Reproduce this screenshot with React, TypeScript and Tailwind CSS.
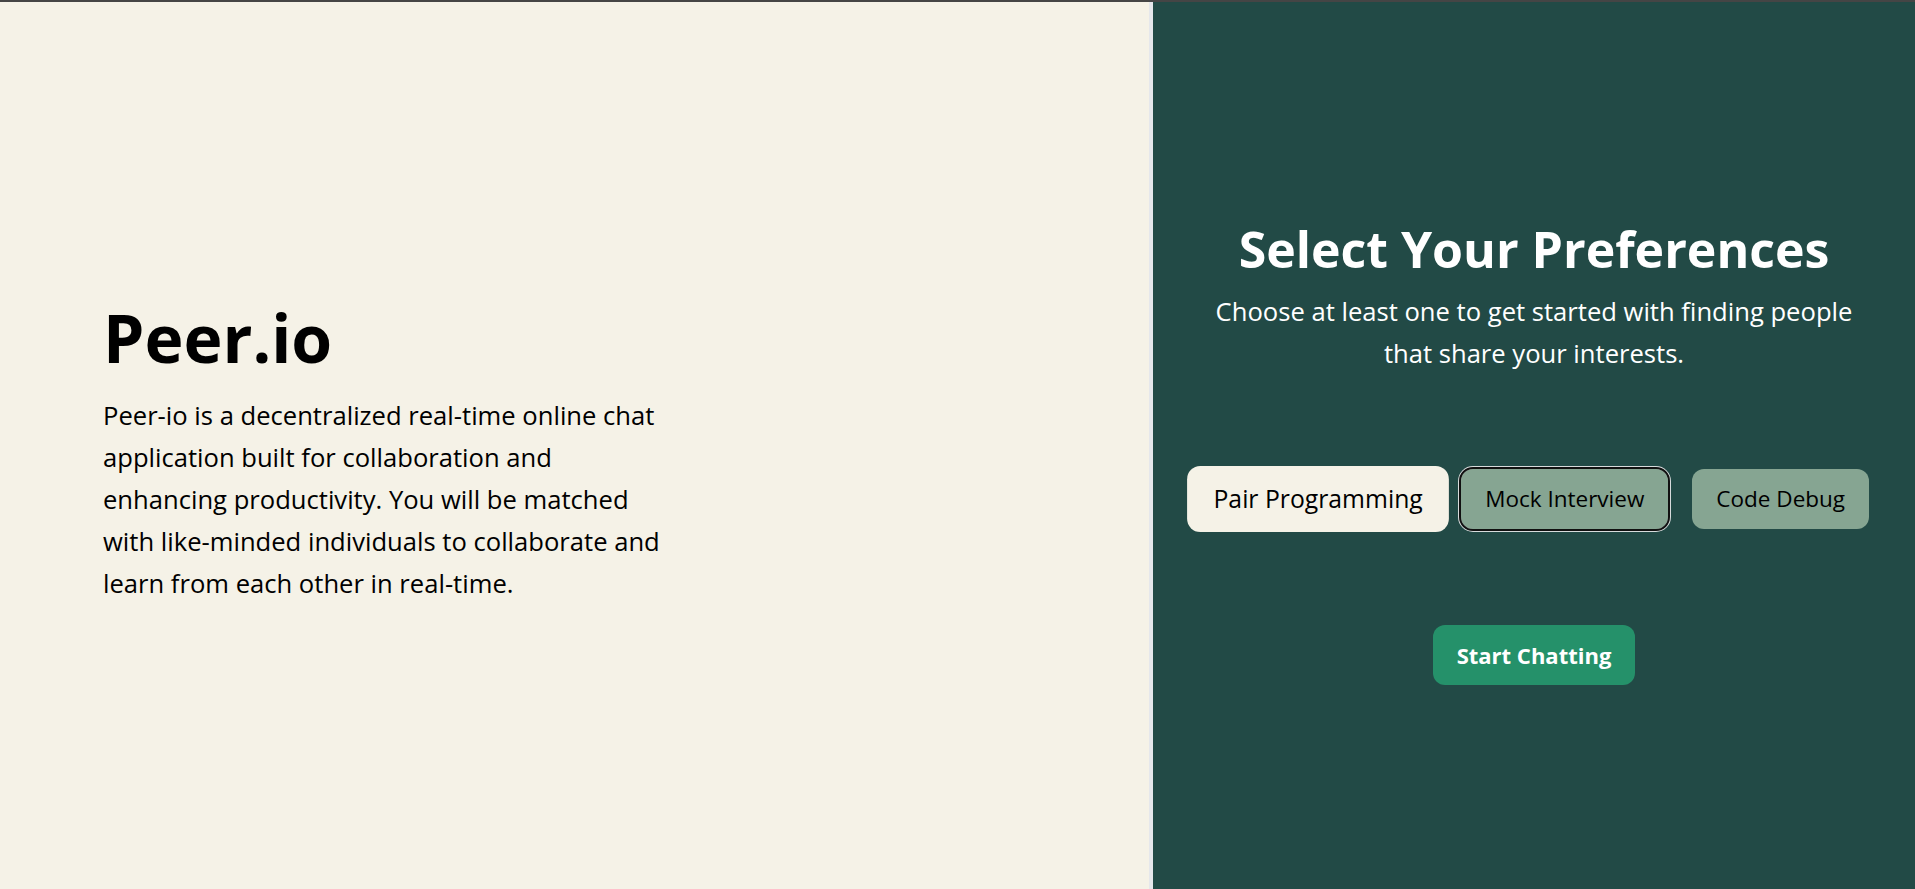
import { useState } from "react";

const options = ["Pair Programming", "Mock Interview", "Code Debug"];

export default function App() {
    const [selected, setSelected] = useState<string[]>(["Pair Programming"]);

    function toggle(name: string) {
        setSelected((prev) => (prev.includes(name) ? prev.filter((p) => p !== name) : [...prev, name]));
    }

    return (
        <div className="h-[889px] w-full flex flex-col border-t-2 border-[#454545] font-['Open_Sans',sans-serif] overflow-hidden">
            <div className="flex flex-1 min-h-0">
                {/* Left side */}
                <div className="w-[1149px] shrink-0 bg-[#f5f2e7] flex flex-col justify-center pl-[103px] pt-[14px]">
                    <h1 className="text-[66px] leading-[72px] font-bold text-black">Peer.io</h1>
                    <p className="mt-[22px] w-[620px] text-[25.6px] leading-[42px] text-black">
                        Peer-io is a decentralized real-time online chat
                        <br />
                        application built for collaboration and
                        <br />
                        enhancing productivity. You will be matched
                        <br />
                        with like-minded individuals to collaborate and
                        <br />
                        learn from each other in real-time.
                    </p>
                </div>

                {/* Right side */}
                <div className="flex-1 bg-[#224a46] border-l-4 border-gray-200 flex flex-col items-center justify-center pt-[18px] text-center">
                    <h2 className="text-[50px] leading-none font-bold text-white">Select Your Preferences</h2>
                    <p className="mt-[17px] w-[665px] text-[25.6px] leading-[42px] text-white">
                        Choose at least one to get started with finding people that share your interests.
                    </p>
                    <div className="mt-[94px] flex items-center gap-6">
                        {options.map((opt) => {
                            const on = selected.includes(opt);
                            const focused = opt === "Mock Interview";
                            return (
                                <button
                                    key={opt}
                                    onClick={() => toggle(opt)}
                                    className={`px-6 py-3 rounded-xl text-[22.5px] leading-9 text-black ${
                                        on ? "bg-[#f5f2e7] scale-110" : "bg-[#86a592]"
                                    } ${focused ? "outline-2 outline-[#111] shadow-[0_0_0_3px_#d7dbdc]" : ""}`}
                                >
                                    {opt}
                                </button>
                            );
                        })}
                    </div>
                    <button className="mt-24 px-6 py-3 rounded-xl bg-[#25916a] text-[22px] leading-9 font-bold text-white">
                        Start Chatting
                    </button>
                </div>
            </div>
        </div>
    );
}
